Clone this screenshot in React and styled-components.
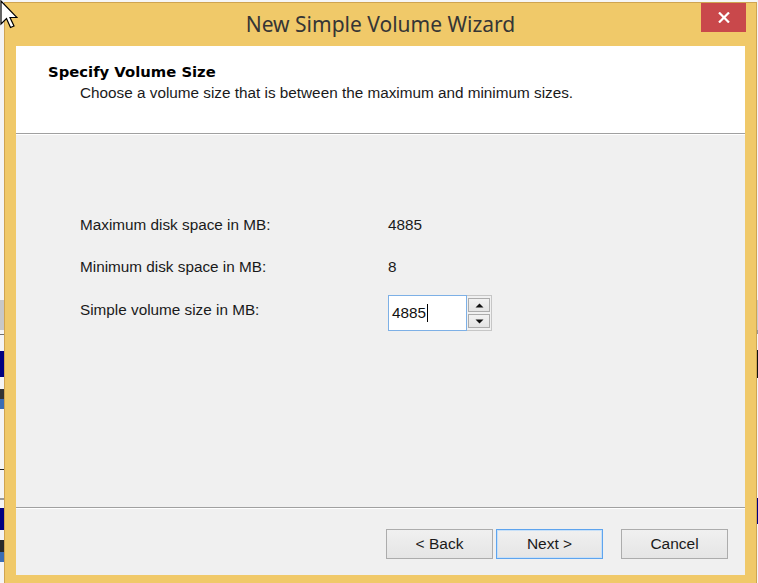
import React from "react";
import styled, { createGlobalStyle } from "styled-components";

const Global = createGlobalStyle`
  html, body { margin: 0; padding: 0; }
  body { width: 758px; height: 583px; overflow: hidden; background: #f4f4f4; }
  #root { width: 758px; height: 583px; }
`;

const Desktop = styled.div`
  position: relative;
  width: 758px;
  height: 583px;
  overflow: hidden;
  display: flex;
  align-items: flex-start;
  background: #f6f6f6;
  font-family: "Liberation Sans", Arial, sans-serif;
`;

const Peek = styled.div`
  width: ${(p) => p.$w}px;
  height: 583px;
  flex: none;
  display: flex;
  flex-direction: column;
`;

const Strip = styled.div`
  height: ${(p) => p.$h}px;
  flex: none;
  background: ${(p) => p.$c};
`;

const Window = styled.div`
  flex: none;
  width: 753px;
  height: 590px;
  margin-top: 2px;
  background: #f0c969;
  border: 1px solid #cfa451;
  padding: 0 11px;
  box-sizing: border-box;
  display: flex;
  flex-direction: column;
`;

const TitleBar = styled.div`
  height: 43px;
  flex: none;
  display: grid;
  grid-template-columns: 1fr auto 1fr;
  align-items: start;
`;

const Title = styled.div`
  grid-column: 2;
  padding-top: 7px;
  font-family: "Noto Sans", "Open Sans", sans-serif;
  font-size: 21px;
  color: #353535;
  white-space: nowrap;
`;

const CloseButton = styled.div`
  grid-column: 3;
  justify-self: end;
  margin-right: -1px;
  width: 45px;
  height: 29px;
  background: #c9484b;
  display: flex;
  align-items: center;
  justify-content: center;
`;

const Client = styled.div`
  width: 729px;
  height: 529px;
  flex: none;
  display: flex;
  flex-direction: column;
  background: #f0f0f0;
`;

const Header = styled.div`
  height: 88px;
  flex: none;
  background: #ffffff;
  padding: 17px 0 0 32px;
  box-sizing: border-box;
  border-bottom: 1px solid #a0a0a0;
`;

const HeaderTitle = styled.div`
  font-family: "DejaVu Sans", Verdana, sans-serif;
  font-weight: bold;
  font-size: 14.8px;
  color: #000;
  line-height: 18px;
`;

const HeaderText = styled.div`
  margin: 3px 0 0 32px;
  font-size: 15.3px;
  line-height: 18px;
  color: #1a1a1a;
`;

const Divider = styled.div`
  height: 1px;
  flex: none;
  background: #ffffff;
`;

const Body = styled.div`
  height: 373px;
  flex: none;
  box-sizing: border-box;
  padding: 69px 0 0 64px;
  border-bottom: 1px solid #a0a0a0;
  display: grid;
  grid-template-columns: 308px auto;
  grid-auto-rows: min-content;
  align-items: center;
`;

const Label = styled.div`
  font-size: 15.3px;
  color: #1a1a1a;
  height: ${(p) => p.$h}px;
  margin-top: ${(p) => p.$top || 0}px;
  align-self: start;
  display: flex;
  align-items: center;
`;

const Value = styled(Label)``;

const SpinBox = styled.div`
  display: flex;
  align-items: stretch;
  align-self: start;
  margin-top: 7px;
  height: 36px;
`;

const SpinInput = styled.div`
  width: 79px;
  box-sizing: border-box;
  border: 1px solid #7db0e6;
  background: #fff;
  display: flex;
  align-items: center;
  padding-left: 3px;
  font-size: 15.3px;
  color: #111;
`;

const Caret = styled.span`
  display: inline-block;
  width: 1px;
  height: 18px;
  background: #000;
  margin-left: 1px;
`;

const SpinButtons = styled.div`
  width: 25px;
  box-sizing: border-box;
  border: 1px solid #c6c6c6;
  border-left: none;
  background: #f0f0f0;
  display: flex;
  flex-direction: column;
  justify-content: space-between;
  padding: 2px 1px;
`;

const SpinBtn = styled.div`
  height: 14px;
  box-sizing: border-box;
  border: 1px solid #acacac;
  background: linear-gradient(#f2f2f2, #e4e4e4);
  display: flex;
  align-items: center;
  justify-content: center;
`;

const Footer = styled.div`
  flex: 1;
  border-top: 1px solid #ffffff;
  display: flex;
  justify-content: flex-end;
  align-items: flex-start;
  padding: 20px 17px 0 0;
`;

const Button = styled.div`
  width: 107px;
  height: 30px;
  box-sizing: border-box;
  margin-left: ${(p) => p.$gap}px;
  border: 1px solid ${(p) => (p.$default ? "#5ea4ee" : "#acacac")};
  background: linear-gradient(#f0f0f0, #e5e5e5);
  display: flex;
  align-items: center;
  justify-content: center;
  font-size: 15.5px;
  color: #1a1a1a;
  box-shadow: ${(p) => (p.$default ? "inset 0 0 0 1px #c7e0f8" : "none")};
`;

const Cursor = styled.svg`
  position: absolute;
  left: 0;
  top: 0;
`;

const leftStrips = [
  [300, "#f4f4f4"],
  [30, "#c8c8c8"],
  [4, "#f4f4f4"],
  [1, "#707070"],
  [16, "#f4f4f4"],
  [26, "#000080"],
  [12, "#f4f4f4"],
  [10, "#333"],
  [10, "#3b6db5"],
  [60, "#f4f4f4"],
  [1, "#222"],
  [28, "#f4f4f4"],
  [2, "#999"],
  [8, "#f4f4f4"],
  [22, "#000080"],
  [10, "#f4f4f4"],
  [12, "#2a2a2a"],
  [10, "#3b6db5"],
  [20, "#f4f4f4"],
];

const rightStrips = [
  [300, "#f4f4f4"],
  [30, "#cccccc"],
  [4, "#999"],
  [16, "#f4f4f4"],
  [28, "#111"],
  [120, "#f4f4f4"],
  [26, "#000080"],
  [60, "#f4f4f4"],
];

export default function App() {
  return (
    <>
      <Global />
      <Desktop>
        <Peek $w={4}>
          {leftStrips.map(([h, c], i) => (
            <Strip key={i} $h={h} $c={c} />
          ))}
        </Peek>
        <Window>
          <TitleBar>
            <Title>New Simple Volume Wizard</Title>
            <CloseButton>
              <svg width="12" height="11" viewBox="0 0 12 11">
                <path d="M1 0.5 L11 10.5 M11 0.5 L1 10.5" stroke="#fff" strokeWidth="2.2" fill="none" />
              </svg>
            </CloseButton>
          </TitleBar>
          <Client>
            <Header>
              <HeaderTitle>Specify Volume Size</HeaderTitle>
              <HeaderText>Choose a volume size that is between the maximum and minimum sizes.</HeaderText>
            </Header>
            <Divider />
            <Body>
              <Label $h={42}>Maximum disk space in MB:</Label>
              <Value $h={42}>4885</Value>
              <Label $h={42}>Minimum disk space in MB:</Label>
              <Value $h={42}>8</Value>
              <Label $h={30} $top={7}>Simple volume size in MB:</Label>
              <SpinBox>
                <SpinInput>
                  4885<Caret />
                </SpinInput>
                <SpinButtons>
                  <SpinBtn>
                    <svg width="9" height="5" viewBox="0 0 9 5">
                      <path d="M0.5 4.5 L4.5 0.5 L8.5 4.5 Z" fill="#111" />
                    </svg>
                  </SpinBtn>
                  <SpinBtn>
                    <svg width="9" height="5" viewBox="0 0 9 5">
                      <path d="M0.5 0.5 L4.5 4.5 L8.5 0.5 Z" fill="#111" />
                    </svg>
                  </SpinBtn>
                </SpinButtons>
              </SpinBox>
            </Body>
            <Footer>
              <Button $gap={0}>&lt; Back</Button>
              <Button $gap={3} $default>Next &gt;</Button>
              <Button $gap={18}>Cancel</Button>
            </Footer>
          </Client>
        </Window>
        <Peek $w={1}>
          {rightStrips.map(([h, c], i) => (
            <Strip key={i} $h={h} $c={c} />
          ))}
        </Peek>
        <Cursor width="18" height="30" viewBox="0 0 18 30">
          <path
            d="M1 1 L1 24 L6.5 18.5 L10.5 27.5 L14 26 L10 17.5 L17 17.5 Z"
            fill="#fff"
            stroke="#000"
            strokeWidth="1.2"
          />
        </Cursor>
      </Desktop>
    </>
  );
}
